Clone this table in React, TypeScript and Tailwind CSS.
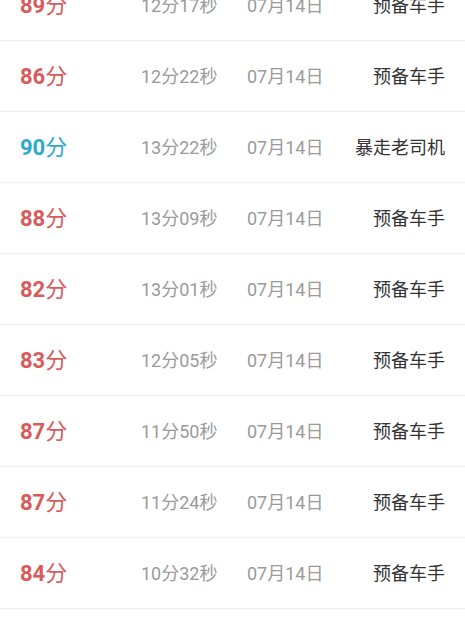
import React from 'react';

type Record = { score: number; time: string; date: string; title: string };

const records: Record[] = [
  { score: 89, time: '12分17秒', date: '07月14日', title: '预备车手' },
  { score: 86, time: '12分22秒', date: '07月14日', title: '预备车手' },
  { score: 90, time: '13分22秒', date: '07月14日', title: '暴走老司机' },
  { score: 88, time: '13分09秒', date: '07月14日', title: '预备车手' },
  { score: 82, time: '13分01秒', date: '07月14日', title: '预备车手' },
  { score: 83, time: '12分05秒', date: '07月14日', title: '预备车手' },
  { score: 87, time: '11分50秒', date: '07月14日', title: '预备车手' },
  { score: 87, time: '11分24秒', date: '07月14日', title: '预备车手' },
  { score: 84, time: '10分32秒', date: '07月14日', title: '预备车手' },
  { score: 85, time: '11分02秒', date: '07月14日', title: '预备车手' },
];

export default function App() {
  return (
    <div className="h-[620px] w-[465px] overflow-hidden bg-white font-['Roboto','Noto_Sans_CJK_SC',sans-serif]">
      {/* list is scrolled a little, first row cut off at the top */}
      <div className="-mt-[30px]">
        {records.map((r, i) => (
          <div key={i} className="flex h-[71px] items-center border-b border-[#f0f0f0] pl-5 pr-5">
            <div className={`w-[121px] text-[22px] ${r.score >= 90 ? 'text-[#2ea9cc]' : 'text-[#d95a5b]'}`}>
              <span className="font-bold">{r.score}</span>
              <span>分</span>
            </div>
            <div className="w-[106px] text-[18px] text-[#9a9a9a]">{r.time}</div>
            <div className="text-[18px] text-[#9a9a9a]">{r.date}</div>
            <div className="flex-1 text-right text-[18px] text-[#333]">{r.title}</div>
          </div>
        ))}
      </div>
    </div>
  );
}
